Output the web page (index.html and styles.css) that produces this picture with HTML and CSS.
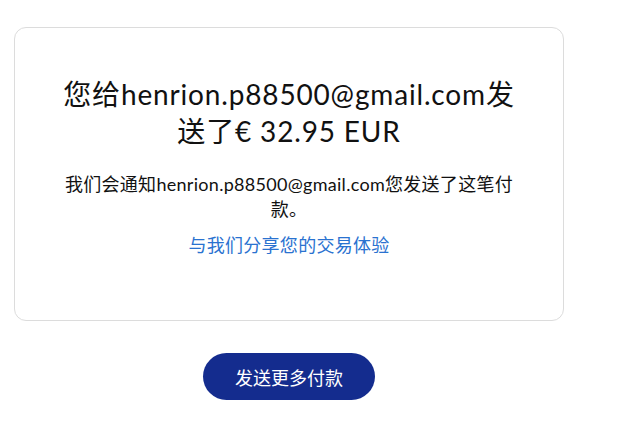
FILE: index.html
```html
<!DOCTYPE html>
<html lang="zh-CN">
<head>
    <meta charset="UTF-8">
    <meta name="viewport" content="width=device-width, initial-scale=1.0">
    <title>付款已发送</title>
    <link rel="stylesheet" href="styles.css">
</head>
<body>
    <main class="page">
        <section class="card">
            <h1 class="title">您给henrion.p88500@gmail.com发送了€ 32.95 EUR</h1>
            <p class="note">我们会通知henrion.p88500@gmail.com您发送了这笔付款。</p>
            <a class="share-link" href="#">与我们分享您的交易体验</a>
        </section>
        <div class="actions">
            <button type="button" class="primary-btn">发送更多付款</button>
        </div>
    </main>
</body>
</html>
```

FILE: styles.css
```css
body {
    margin: 0;
    padding: 0;
    background-color: #fff;
    color: #111;
    font-family: Lato, "Noto Sans CJK SC", sans-serif;
    letter-spacing: 0.018em;
}

.page {
    width: 550px;
    padding: 27px 14px;
}

.card {
    border: 1px solid #dcdcdc;
    border-radius: 12px;
    padding: 48px 36px 62px;
    text-align: center;
}

.title {
    max-width: 460px;
    margin: 0 auto;
    font-size: 28px;
    line-height: 37px;
    font-weight: 400;
    letter-spacing: 0.03em;
}

.note {
    margin: 22px 0 11px;
    font-size: 18px;
    line-height: 25px;
}

.share-link {
    display: inline-block;
    font-size: 18px;
    line-height: 25px;
    color: #2a72d0;
    text-decoration: none;
}

.actions {
    display: flex;
    justify-content: center;
    margin-top: 32px;
}

.primary-btn {
    width: 172px;
    height: 47px;
    border: none;
    border-radius: 24px;
    background-color: #142c8e;
    color: #fff;
    font-family: Lato, "Noto Sans CJK SC", sans-serif;
    font-size: 18px;
    cursor: pointer;
}
```
